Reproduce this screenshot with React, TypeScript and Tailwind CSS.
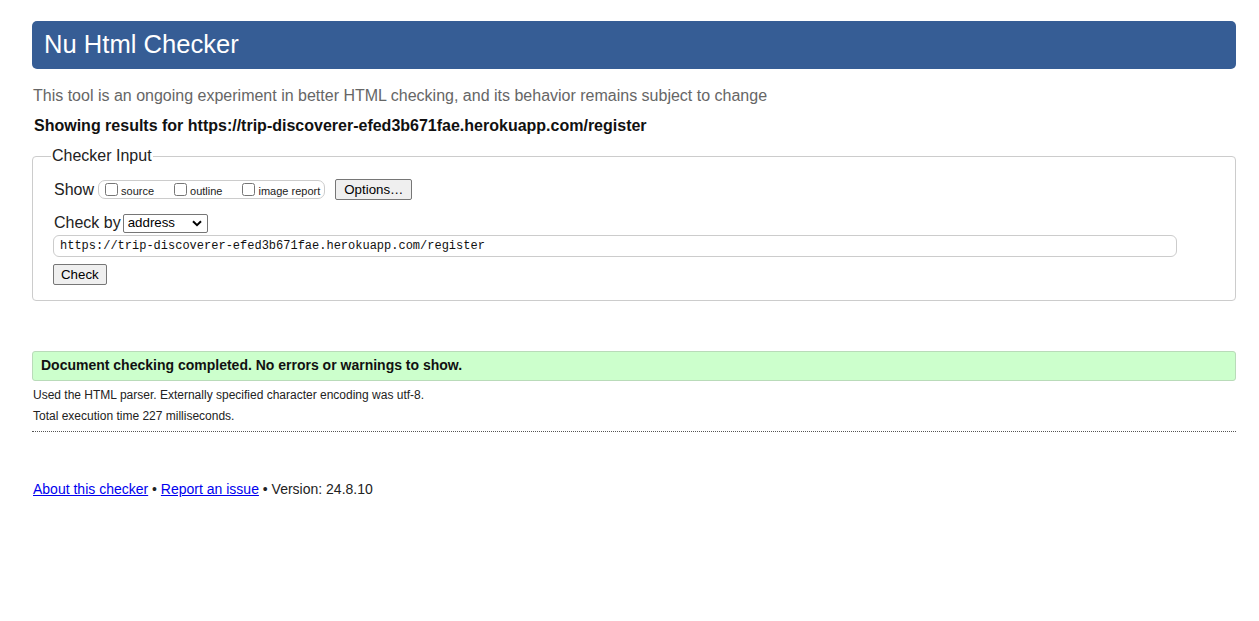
import React from "react";

export default function App() {
  return (
    <div className="min-h-[621px] bg-white pl-[32px] pr-[23px] pt-[21px] text-[#222] [font-family:'Liberation_Sans',Arial,sans-serif]">
      <div className="flex h-[48px] items-center rounded-[5px] bg-[#365d95] pl-[12px]">
        <h1 className="text-[25.6px] leading-none text-white">Nu Html Checker</h1>
      </div>
      <p className="mt-[17px] pl-[1px] text-[16px] leading-[20px] text-[#666]">
        This tool is an ongoing experiment in better HTML checking, and its behavior remains subject to change
      </p>
      <p className="mt-[10px] pl-[2px] text-[16px] font-bold leading-[20px] text-[#111]">
        Showing results for https://trip-discoverer-efed3b671fae.herokuapp.com/register
      </p>
      <fieldset className="mt-[11px] rounded-[4px] border border-[#ccc] pb-[14px] pl-[20px] pr-[58px]">
        <legend className="-ml-[2px] px-[1px] text-[16px] leading-[18px] text-[#222]">Checker Input</legend>
        <div className="mt-[14px] flex items-center pl-[1px]">
          <span className="text-[16px] leading-[20px]">Show</span>
          <div className="ml-[4px] flex h-[19px] items-center rounded-[7px] border border-[#ccc] pl-[6px] pr-[4px] text-[11px]">
            <label className="flex items-center">
              <input type="checkbox" className="h-[13px] w-[13px]" />
              <span className="ml-[3px] mt-[3px]">source</span>
            </label>
            <label className="ml-[20px] flex items-center">
              <input type="checkbox" className="h-[13px] w-[13px]" />
              <span className="ml-[3px] mt-[3px]">outline</span>
            </label>
            <label className="ml-[20px] flex items-center">
              <input type="checkbox" className="h-[13px] w-[13px]" />
              <span className="ml-[3px] mt-[3px]">image report</span>
            </label>
          </div>
          <button className="ml-[10px] h-[21px] rounded-[2px] border border-[#767676] bg-[#efefef] px-[8px] text-[13.3px] leading-none text-black">
            Options…
          </button>
        </div>
        <div className="mt-[13px] flex items-center pl-[1px]">
          <span className="text-[16px] leading-[20px]">Check by</span>
          <div className="relative ml-[2px] flex h-[19px] w-[85px] items-center rounded-[2px] border border-[#767676] bg-white pl-[4px] text-[13.3px] text-black">
            address
            <svg className="absolute right-[5px] top-[5px]" width="10" height="7" viewBox="0 0 10 7">
              <path d="M1 1.2 L5 5.2 L9 1.2" fill="none" stroke="#000" strokeWidth="2" />
            </svg>
          </div>
        </div>
        <div className="mt-[2px] flex h-[22px] items-center rounded-[6px] border border-[#ccc] pl-[6px] text-[12px] text-[#111] [font-family:'Liberation_Mono',monospace]">
          https://trip-discoverer-efed3b671fae.herokuapp.com/register
        </div>
        <button className="mt-[7px] h-[21px] rounded-[2px] border border-[#767676] bg-[#efefef] px-[7px] text-[13.3px] leading-none text-black">
          Check
        </button>
      </fieldset>
      <div className="mt-[50px] flex h-[30px] items-center rounded-[3px] border border-[#b9dbb9] bg-[#ccffcc] pl-[8px] text-[14px] font-bold text-[#111]">
        Document checking completed. No errors or warnings to show.
      </div>
      <p className="mt-[6px] pl-[1px] text-[12px] leading-[16px] text-[#222]">
        Used the HTML parser. Externally specified character encoding was utf-8.
      </p>
      <p className="mt-[5px] pl-[1px] text-[12px] leading-[16px] text-[#222]">Total execution time 227 milliseconds.</p>
      <div className="mt-[7px] border-t border-dotted border-[#555]" />
      <p className="mt-[48px] pl-[1px] text-[14px] leading-[18px] text-[#222]">
        <a href="#" className="text-[#0000ee] underline">About this checker</a>
        {" • "}
        <a href="#" className="text-[#0000ee] underline">Report an issue</a>
        {" • Version: 24.8.10"}
      </p>
    </div>
  );
}
